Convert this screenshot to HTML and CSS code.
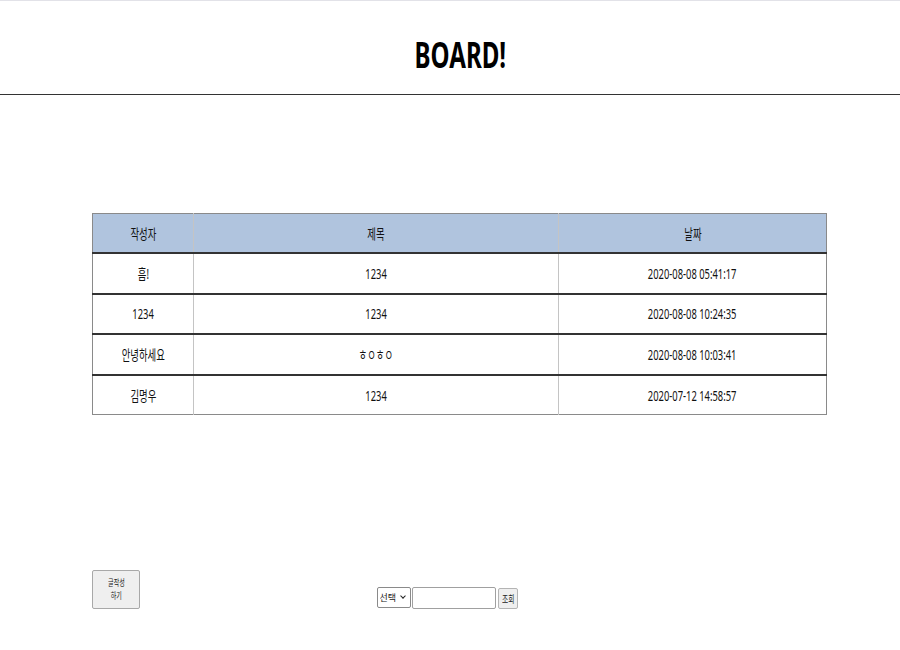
FILE: index.html
```html
<!DOCTYPE html>
<html lang="ko">
<head>
<meta charset="utf-8">
<title>BOARD!</title>
<link rel="stylesheet" href="styles.css">
</head>
<body>
<header class="top">
  <h1 class="title"><span class="sq">BOARD!</span></h1>
</header>
<main class="board">
  <table class="list">
    <thead>
      <tr>
        <th class="c-writer"><span class="sq">작성자</span></th>
        <th class="c-title"><span class="sq">제목</span></th>
        <th class="c-date"><span class="sq">날짜</span></th>
      </tr>
    </thead>
    <tbody>
      <tr>
        <td><span class="sq">흠!</span></td>
        <td><span class="sq">1234</span></td>
        <td><span class="sq">2020-08-08 05:41:17</span></td>
      </tr>
      <tr>
        <td><span class="sq">1234</span></td>
        <td><span class="sq">1234</span></td>
        <td><span class="sq">2020-08-08 10:24:35</span></td>
      </tr>
      <tr>
        <td><span class="sq">안녕하세요</span></td>
        <td><span class="sq">ㅎㅇㅎㅇ</span></td>
        <td><span class="sq">2020-08-08 10:03:41</span></td>
      </tr>
      <tr>
        <td><span class="sq">김명우</span></td>
        <td><span class="sq">1234</span></td>
        <td><span class="sq">2020-07-12 14:58:57</span></td>
      </tr>
    </tbody>
  </table>
</main>
<footer class="bottom">
  <button class="write-btn" type="button">
    <span class="sq line">글작성</span>
    <span class="sq line">하기</span>
  </button>
  <form class="search">
    <span class="sel-wrap">
      <select class="search-sel">
        <option>선택</option>
        <option>작성자</option>
        <option>제목</option>
      </select>
    </span>
    <input class="search-input" type="text">
    <button class="search-btn" type="button"><span class="sq">조회</span></button>
  </form>
  <div></div>
</footer>
</body>
</html>
```
FILE: styles.css
```css
html, body {
  margin: 0;
  padding: 0;
  background: #fff;
}
body {
  font-family: "Noto Sans", "Noto Sans CJK KR", sans-serif;
  color: #000;
}
.sq {
  display: inline-block;
  transform: scaleX(0.67);
  transform-origin: center;
  white-space: nowrap;
}
.top {
  border-top: 1px solid #e2e2e8;
  border-bottom: 1px solid #333;
  height: 95px;
  box-sizing: border-box;
  display: flex;
  align-items: flex-start;
  justify-content: center;
  padding: 34px 0 0 20px;
}
.title {
  margin: 0;
  font-size: 36px;
  font-weight: 700;
  line-height: 1.1;
}
.board {
  padding: 118px 0 0 92px;
}
.list {
  border-collapse: collapse;
  width: 735px;
  border: 1px solid #8a8a8a;
  font-size: 14px;
  color: #111;
}
.list th,
.list td {
  height: 38px;
  padding: 0;
  text-align: center;
  vertical-align: middle;
  border-left: 1px solid #c4c4c4;
  font-weight: 400;
}
.list td {
  height: 38.6px;
}
.list th:first-child,
.list td:first-child {
  border-left: 1px solid #8a8a8a;
}
.list thead tr {
  background: #b0c4de;
  border-bottom: 2px solid #333;
}
.list tbody tr {
  border-bottom: 2px solid #333;
}
.list tbody tr:last-child {
  border-bottom: 1px solid #8a8a8a;
}
.c-writer { width: 100px; }
.c-title { width: 364px; }
.bottom {
  display: grid;
  grid-template-columns: 1fr auto 1fr;
  align-items: end;
  padding: 155px 98px 0 92px;
}
.write-btn {
  justify-self: start;
  display: flex;
  flex-direction: column;
  align-items: center;
  justify-content: center;
  gap: 1px;
  width: 48px;
  height: 39px;
  padding: 0;
  background: #efefef;
  border: 1px solid #a8a8a8;
  border-radius: 2px;
  font-family: "Noto Sans CJK KR", sans-serif;
  font-size: 9px;
  color: #222;
}
.write-btn .line {
  height: 12px;
  line-height: 12px;
}
.search {
  display: flex;
  align-items: flex-end;
  margin: 0;
}
.sel-wrap {
  position: relative;
  display: block;
  margin: 0 1px 1px 0;
}
.sel-wrap::after {
  content: "";
  position: absolute;
  right: 6px;
  top: 7px;
  width: 3px;
  height: 3px;
  border-right: 1.5px solid #222;
  border-bottom: 1.5px solid #222;
  transform: rotate(45deg);
  pointer-events: none;
}
.search-sel {
  display: block;
  -webkit-appearance: none;
  appearance: none;
  width: 34px;
  height: 21px;
  margin: 0;
  padding: 0 0 0 2px;
  font-family: "Noto Sans CJK KR", sans-serif;
  font-size: 9px;
  border: 1px solid #8a8a8a;
  border-radius: 2px;
  background: #fff;
  color: #222;
}
.search-input {
  width: 84px;
  height: 22px;
  box-sizing: border-box;
  margin: 0 2px 0 0;
  padding: 0 2px;
  border: 1px solid #a0a0a0;
  border-radius: 2px;
}
.search-btn {
  width: 20px;
  height: 21px;
  padding: 0;
  background: #efefef;
  border: 1px solid #b4b4b4;
  border-radius: 2px;
  font-family: "Noto Sans CJK KR", sans-serif;
  font-size: 10px;
  color: #222;
}
```
